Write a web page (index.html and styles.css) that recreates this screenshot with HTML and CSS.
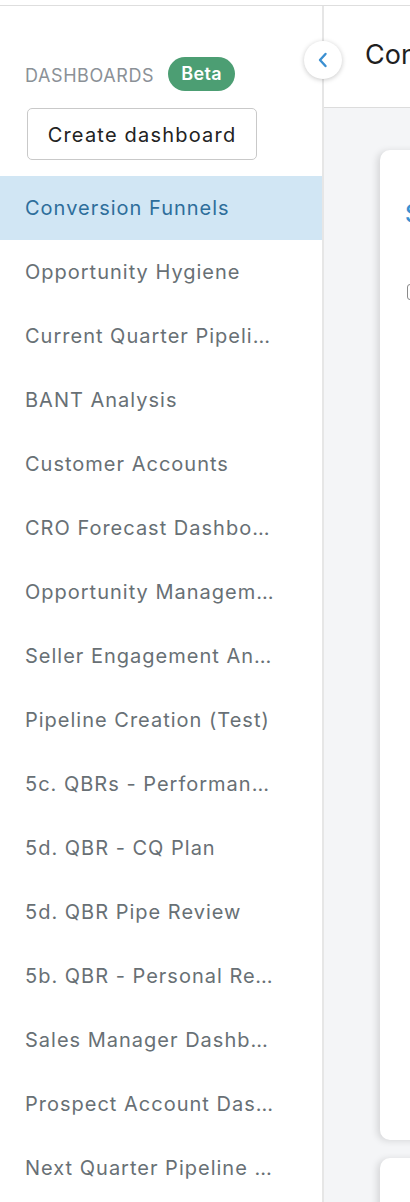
FILE: index.html
```html
<!DOCTYPE html>
<html>
<head>
  <meta charset="UTF-8">
  <title>Dashboards</title>
  <link rel="stylesheet" href="styles.css">
</head>
<body>
  <div class="app">
    <aside class="sidebar">
      <div class="sidebar-head">
        <span class="sidebar-title">Dashboards</span>
        <span class="badge">Beta</span>
      </div>
      <button class="create-btn">Create dashboard</button>
      <ul class="dash-list">
        <li class="active">Conversion Funnels</li>
        <li>Opportunity Hygiene</li>
        <li>Current Quarter Pipeline Review</li>
        <li>BANT Analysis</li>
        <li>Customer Accounts</li>
        <li>CRO Forecast Dashboard</li>
        <li>Opportunity Management</li>
        <li>Seller Engagement Analysis</li>
        <li>Pipeline Creation (Test)</li>
        <li>5c. QBRs - Performance Review</li>
        <li>5d. QBR - CQ Plan</li>
        <li>5d. QBR Pipe Review</li>
        <li>5b. QBR - Personal Review</li>
        <li>Sales Manager Dashboard</li>
        <li>Prospect Account Dashboard</li>
        <li>Next Quarter Pipeline Review</li>
      </ul>
      <button class="collapse-btn" aria-label="Collapse">
        <svg width="14" height="18" viewBox="0 0 14 18"><path d="M9.5 3 L4 9 L9.5 15" fill="none" stroke="#3a8fd1" stroke-width="2.4" stroke-linecap="round" stroke-linejoin="round"/></svg>
      </button>
    </aside>
    <main class="main">
      <header class="main-head">
        <h1>Conversion Funnels</h1>
      </header>
      <section class="content">
        <div class="card">
          <h2 class="card-title">Stage conversion</h2>
          <label class="card-check"><span class="box"></span> Show</label>
        </div>
        <div class="card card-next"></div>
      </section>
    </main>
  </div>
</body>
</html>
```

FILE: styles.css
```css
html, body {
  margin: 0;
  padding: 0;
  background-color: #fff;
}
body {
  font-family: Inter, "Noto Sans", sans-serif;
  width: 410px;
  height: 1202px;
  overflow: hidden;
}
.app {
  margin-top: 5px;
  border-top: 1px solid #dedede;
  display: flex;
  height: 1196px;
}
.sidebar {
  position: relative;
  width: 322px;
  flex: none;
  border-right: 2px solid #e6e6e6;
  padding-top: 51px;
  box-sizing: content-box;
}
.sidebar-head {
  display: flex;
  align-items: center;
  gap: 14px;
  padding-left: 25px;
  height: 34px;
}
.sidebar-title {
  text-transform: uppercase;
  color: #8b9197;
  font-size: 18px;
  letter-spacing: 0.6px;
  padding-top: 2px;
}
.badge {
  background-color: #4c9e73;
  color: #fff;
  font-weight: 600;
  font-size: 18px;
  letter-spacing: 0.4px;
  height: 34px;
  line-height: 34px;
  padding: 0 13px;
  border-radius: 17px;
}
.create-btn {
  display: block;
  margin: 17px 0 16px 27px;
  width: 230px;
  height: 52px;
  padding-top: 3px;
  background: #fff;
  border: 1px solid #c9c9c9;
  border-radius: 5px;
  font-family: inherit;
  font-size: 20px;
  letter-spacing: 1.2px;
  color: #222;
  cursor: pointer;
}
.dash-list {
  list-style: none;
  margin: 0;
  padding: 0;
}
.dash-list li {
  height: 64px;
  line-height: 64px;
  padding: 0 43px 0 25px;
  font-size: 20px;
  letter-spacing: 1px;
  color: #687075;
  white-space: nowrap;
  overflow: hidden;
  text-overflow: ellipsis;
}
.dash-list li.active {
  background-color: #d1e6f4;
  color: #2e6e9b;
}
.collapse-btn {
  position: absolute;
  top: 35px;
  right: -20px;
  width: 38px;
  height: 38px;
  border-radius: 50%;
  border: none;
  background: #fff;
  box-shadow: 0 1px 5px rgba(0, 0, 0, 0.22);
  display: flex;
  align-items: center;
  justify-content: center;
  padding: 0;
  z-index: 2;
}
.main {
  flex: 1;
  min-width: 0;
  display: flex;
  flex-direction: column;
  overflow: hidden;
}
.main-head {
  height: 101px;
  border-bottom: 1px solid #dcdcdc;
  display: flex;
  align-items: center;
  padding-left: 41px;
  flex: none;
}
.main-head h1 {
  margin: 0 0 4px;
  font-size: 27px;
  font-weight: 400;
  color: #1f1f1f;
  white-space: nowrap;
}
.content {
  flex: 1;
  background-color: #f4f5f7;
  padding: 42px 0 0 56px;
  display: flex;
  flex-direction: column;
  gap: 18px;
}
.card {
  background: #fff;
  border-radius: 10px 0 0 10px;
  box-shadow: -3px 1px 7px rgba(0, 0, 0, 0.12);
  width: 400px;
  height: 990px;
  padding: 49px 0 0 25px;
  box-sizing: border-box;
  flex: none;
}
.card-title {
  margin: 0;
  font-size: 24px;
  font-weight: 500;
  color: #3a8fd1;
  white-space: nowrap;
}
.card-check {
  display: flex;
  align-items: center;
  gap: 8px;
  margin-top: 54px;
  margin-left: 2px;
  font-size: 16px;
  color: #555;
}
.box {
  width: 13px;
  height: 14px;
  border: 1.5px solid #8a8a8a;
  border-radius: 3px;
  display: inline-block;
}
.card-next {
  height: 100px;
  padding: 0;
}
```
